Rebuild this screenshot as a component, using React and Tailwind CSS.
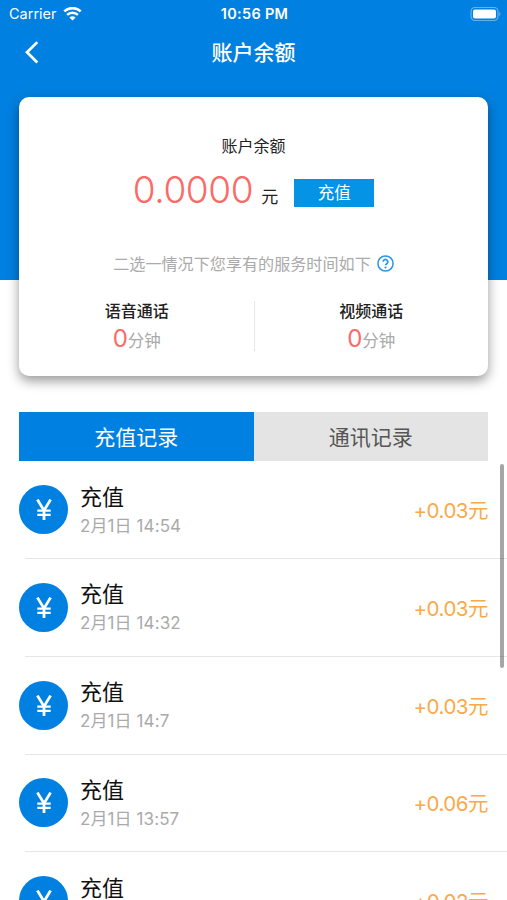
const records = [
  { id: 1, title: "充值", time: "2月1日 14:54", amount: "+0.03元" },
  { id: 2, title: "充值", time: "2月1日 14:32", amount: "+0.03元" },
  { id: 3, title: "充值", time: "2月1日 14:7", amount: "+0.03元" },
  { id: 4, title: "充值", time: "2月1日 13:57", amount: "+0.06元" },
  { id: 5, title: "充值", time: "2月1日 13:55", amount: "+0.02元" },
];

const StatusBar = () => (
  <div className="grid grid-cols-3 items-center h-7 pl-[9px] pr-[6px] leading-7">
    <div className="flex items-center gap-[6px]">
      <span className="text-[14.5px]">Carrier</span>
      <svg className="w-[19px] h-[14px]" viewBox="0 0 19 14" fill="none" stroke="currentColor">
        <path d="M1.3 4.4a11.8 11.8 0 0 1 16.4 0" strokeWidth="2.6" />
        <path d="M4.1 7.9a7.7 7.7 0 0 1 10.8 0" strokeWidth="2.4" />
        <path d="M9.5 13.6 6.4 10.5a4.4 4.4 0 0 1 6.2 0Z" fill="currentColor" stroke="none" />
      </svg>
    </div>
    <span className="-ml-px text-center text-[14.5px] tracking-[0.3px] font-semibold whitespace-nowrap">10:56 PM</span>
    <svg className="justify-self-end w-[31px] h-[15px]" viewBox="0 0 31 15" fill="none">
      <rect x="1" y="0.5" width="27" height="13" rx="4" stroke="#66b3ec" strokeWidth="1.2" />
      <rect x="3" y="2.5" width="23" height="9" rx="2" fill="white" />
      <path d="M29.3 5v4c1.6-.8 1.6-3.2 0-4Z" fill="#66b3ec" />
    </svg>
  </div>
);

const CallTime = ({ label }) => (
  <div className="flex-1 flex flex-col items-center">
    <span className="text-[16px] leading-5 font-medium text-[#222]">{label}</span>
    <div className="flex items-baseline mt-1 leading-7">
      <span className="text-[24px] text-[#fb6a66]">0</span>
      <span className="text-[16.5px] text-[#aaa]">分钟</span>
    </div>
  </div>
);

const RecordRow = ({ record }) => (
  <li className="h-[97.75px] pl-[19px]">
    <div className="flex items-center h-[97px] pr-[19px] pt-px">
      <div className="-mt-px flex items-center justify-center w-[49px] h-[49px] rounded-full bg-[#0080e0] text-white">
        <svg className="w-4 h-[21px]" viewBox="0 0 16 21" fill="none" stroke="currentColor">
          <path d="M1.4 0.6 8 11.4 14.6 0.6M8 10.5V21" strokeWidth="2.8" />
          <path d="M1.3 11.6h13.4M1.3 15.8h13.4" strokeWidth="2.2" />
        </svg>
      </div>
      <div className="flex-1 pl-3">
        <div className="text-[22px] leading-7 text-[#111]">{record.title}</div>
        <div className="text-[17px] leading-6 mt-[3px] tracking-[0.1px] text-[#aaa]">{record.time}</div>
      </div>
      <span className="mt-[3px] text-[20.5px] tracking-[-0.5px] text-[#faa949]">{record.amount}</span>
    </div>
    <div className="ml-[6px] h-px bg-[#e6e6e6]" />
  </li>
);

export default function App() {
  return (
    <div className="relative w-full h-[900px] overflow-hidden bg-white font-['Inter','Noto_Sans_CJK_SC',sans-serif]">
      <header className="h-[280px] bg-[#0080e0] text-white">
        <StatusBar />
        <div className="grid grid-cols-[60px_1fr_60px] items-center h-12">
          <svg className="ml-[25px] w-[14px] h-[23px]" viewBox="0 0 14 23" fill="none" stroke="currentColor" strokeWidth="2.7">
            <path d="M12.3 1.1 2 11.3l10.3 10.2" />
          </svg>
          <h1 className="pt-px text-center text-[21px] font-medium">账户余额</h1>
        </div>
      </header>

      {/* Balance card */}
      <section className="relative -mt-[183px] mx-[19px] h-[279px] rounded-[10px] bg-white shadow-[0_5px_12px_rgba(0,0,0,0.4)] flex flex-col items-center pt-[39px]">
        <h2 className="text-[16px] leading-5 text-[#222]">账户余额</h2>
        <div className="flex items-center h-12 mt-[10px]">
          <div className="flex items-baseline">
            <span className="text-[37px] leading-12 tracking-[-0.4px] font-[350] text-[#fb6a66]">0.0000</span>
            <span className="ml-2 text-[17px] text-[#222]">元</span>
          </div>
          <button className="ml-4 mt-[5px] w-20 h-7 bg-[#0593e6] text-white text-[16.5px] leading-7">充值</button>
        </div>
        <div className="flex items-center gap-[6px] mt-[37px] h-6 text-[16.1px] text-[#aaa]">
          <span className="pt-[2px]">二选一情况下您享有的服务时间如下</span>
          <svg className="w-[17px] h-[17px]" viewBox="0 0 17 17" fill="none" stroke="#2c96e8" strokeWidth="1.5">
            <circle cx="8.5" cy="8.5" r="7.6" />
            <path d="M6.2 6.8a2.3 2.3 0 1 1 3.7 1.8c-.9.6-1.4.9-1.4 1.6" strokeWidth="1.8" />
            <circle cx="8.5" cy="12.5" r="1.1" fill="#2c96e8" stroke="none" />
          </svg>
        </div>
        <div className="flex w-full mt-[26px] pl-px">
          <CallTime label="语音通话" />
          <div className="w-px h-[50px] bg-[#e6e6e6]" />
          <CallTime label="视频通话" />
        </div>
      </section>

      {/* Tabs */}
      <div className="flex mx-[19px] mt-9 h-[49px] text-[21px]">
        <button className="flex-1 pt-[2px] bg-[#0080e0] text-white">充值记录</button>
        <button className="flex-1 pt-[2px] bg-[#e4e4e4] text-[#555]">通讯记录</button>
      </div>

      <ul>
        {records.map((record) => (
          <RecordRow key={record.id} record={record} />
        ))}
      </ul>

      {/* Scroll indicator */}
      <div className="absolute right-[3px] top-[464px] w-1 h-[204px] rounded-full bg-black/35" />
    </div>
  );
}
